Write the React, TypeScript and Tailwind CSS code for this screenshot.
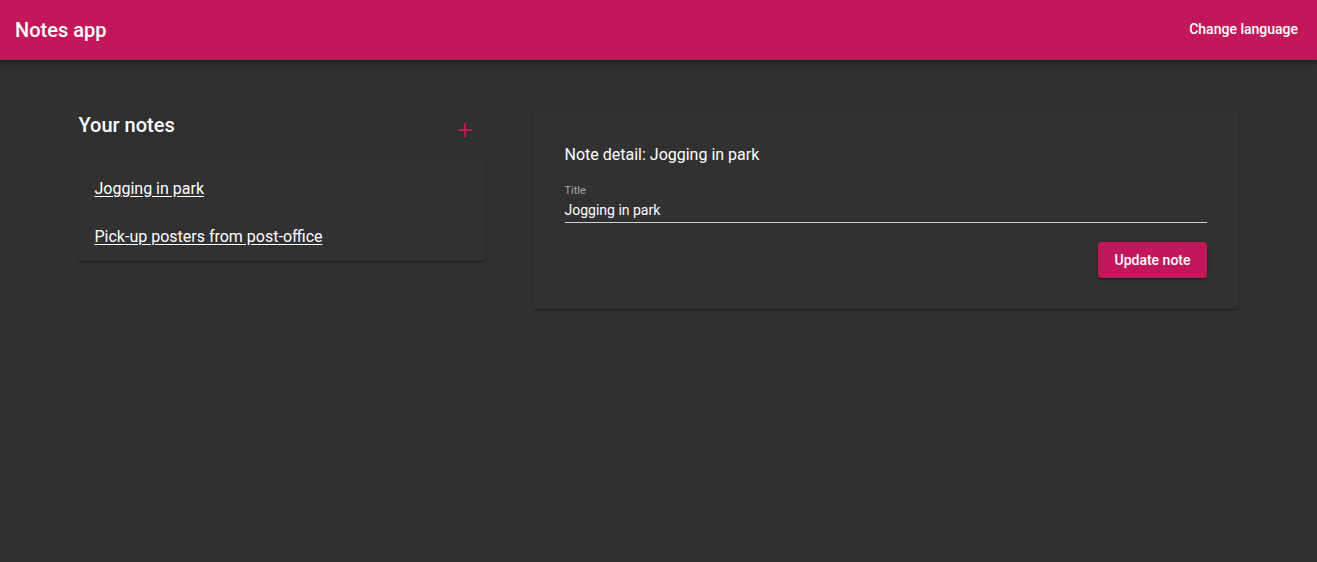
import React from "react";

export default function App() {
  return (
    <div
      className="min-h-[562px] w-full bg-[#303030] text-white"
      style={{ fontFamily: "Roboto, 'Liberation Sans', sans-serif" }}
    >
      <header className="relative z-10 flex h-[60px] items-center justify-between bg-[#c2185b] px-[15px] shadow-[0_2px_4px_-1px_rgba(0,0,0,0.2),0_4px_5px_0_rgba(0,0,0,0.14),0_1px_10px_0_rgba(0,0,0,0.12)]">
        <h1 className="text-[20px] font-medium leading-[32px]">Notes app</h1>
        <button className="pb-[2px] pr-[4px] text-[14px] font-medium text-white">Change language</button>
      </header>

      <main className="mx-auto flex w-[1160px] gap-[48px] pt-[49px]">
        <section className="w-[406px] shrink-0">
          <div className="flex h-[48px] items-start justify-between">
            <h2 className="text-[20px] font-medium leading-[32px]">Your notes</h2>
            <button className="mr-[12px] mt-[13px] text-[#c2185b]" aria-label="Add note">
              <svg width="16" height="16" viewBox="0 0 16 16">
                <path d="M8 1v14M1 8h14" stroke="#c2185b" strokeWidth="1.8" fill="none" />
              </svg>
            </button>
          </div>
          <div className="rounded-[4px] bg-[#313131] pt-[8px] shadow-[0_2px_1px_-1px_rgba(0,0,0,0.2),0_1px_1px_0_rgba(0,0,0,0.14),0_1px_3px_0_rgba(0,0,0,0.12)]">
            <div className="flex h-[48px] items-center px-[16px]">
              <a href="#" className="text-[16px] leading-[24px] underline underline-offset-[2px]">Jogging in park</a>
            </div>
            <div className="flex h-[48px] items-center px-[16px]">
              <a href="#" className="text-[16px] leading-[24px] underline underline-offset-[2px]">Pick-up posters from post-office</a>
            </div>
          </div>
        </section>

        <section className="w-[706px] shrink-0">
          <div className="rounded-[4px] bg-[#313131] px-[32px] pb-[31px] pt-[34px] shadow-[0_2px_1px_-1px_rgba(0,0,0,0.2),0_1px_1px_0_rgba(0,0,0,0.14),0_1px_3px_0_rgba(0,0,0,0.12)]">
            <h3 className="text-[16px] leading-[24px]">Note detail: Jogging in park</h3>
            <div className="mt-[17px]">
              <label className="block text-[11px] leading-[14px] text-[#a8a8a8]">Title</label>
              <div className="border-b border-[#d0d0d0] pb-[2px] pt-[2px] text-[14px] leading-[20px]">
                <span className="text-[14px]">Jogging in park</span>
              </div>
            </div>
            <div className="mt-[19px] flex justify-end">
              <button className="h-[36px] rounded-[4px] bg-[#c2185b] px-[16px] text-[14px] font-medium text-white shadow-[0_3px_1px_-2px_rgba(0,0,0,0.2),0_2px_2px_0_rgba(0,0,0,0.14),0_1px_5px_0_rgba(0,0,0,0.12)]">
                Update note
              </button>
            </div>
          </div>
        </section>
      </main>
    </div>
  );
}
